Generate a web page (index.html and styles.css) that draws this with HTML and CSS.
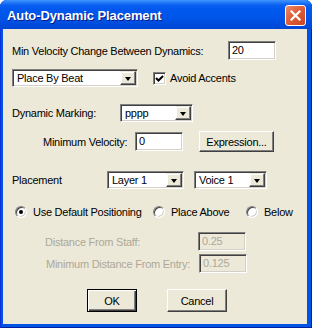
FILE: index.html
```
<!DOCTYPE html>
<html>
    <head>
        <meta charset="utf-8">
        <title>Auto-Dynamic Placement</title>
        <link rel="stylesheet" href="styles.css">
    </head>
    <body>
        <div class="window">
            <div class="titlebar">
                <span class="title">Auto-Dynamic Placement</span>
                <span class="close">
                    <svg width="11" height="11" viewBox="0 0 11 11"><path d="M1.5 1.5 L9.5 9.5 M9.5 1.5 L1.5 9.5" stroke="#fff" stroke-width="2.2" stroke-linecap="square"/></svg>
                </span>
            </div>
            <div class="client">
                <div class="row r1">
                    <span class="label w-vel">Min Velocity Change Between Dynamics:</span>
                    <span class="field w48">20</span>
                </div>
                <div class="row r2">
                    <span class="select w126"><span class="value">Place By Beat</span><span class="arrow"><i></i></span></span>
                    <span class="check">
                        <svg width="9" height="9" viewBox="0 0 9 9"><path d="M1 4 L3.5 6.5 L8 2" fill="none" stroke="#000" stroke-width="2"/></svg>
                    </span>
                    <span class="label">Avoid Accents</span>
                </div>
                <div class="row r3">
                    <span class="label w-mark">Dynamic Marking:</span>
                    <span class="select w73"><span class="value">pppp</span><span class="arrow"><i></i></span></span>
                </div>
                <div class="row r4">
                    <span class="label w-minvel">Minimum Velocity:</span>
                    <span class="field w48">0</span>
                    <span class="button btn-expr">Expression...</span>
                </div>
                <div class="row r5">
                    <span class="label w-place">Placement</span>
                    <span class="select w77"><span class="value">Layer 1</span><span class="arrow"><i></i></span></span>
                    <span class="select w73 voice"><span class="value">Voice 1</span><span class="arrow"><i></i></span></span>
                </div>
                <div class="row r6">
                    <span class="radio-item w138"><span class="radio on"></span>Use Default Positioning</span>
                    <span class="radio-item w93"><span class="radio"></span>Place Above</span>
                    <span class="radio-item"><span class="radio"></span>Below</span>
                </div>
                <div class="row r7">
                    <span class="label disabled w153">Distance From Staff:</span>
                    <span class="field off w48">0.25</span>
                </div>
                <div class="row r8">
                    <span class="label disabled w153">Minimum Distance From Entry:</span>
                    <span class="field off w48">0.125</span>
                </div>
                <div class="row r9">
                    <span class="button default btn-ok">OK</span>
                    <span class="button btn-cancel">Cancel</span>
                </div>
            </div>
        </div>
    </body>
</html>
```
FILE: styles.css
```
body{
    margin: 0;
    background: #fff;
    font-family: "Liberation Sans", Arial, sans-serif;
    font-size: 11px;
    letter-spacing: -0.25px;
    color: #000;
}
.window{
    width: 312px;
    height: 328px;
    display: flex;
    flex-direction: column;
    background: #0054e3;
    border-radius: 7px 7px 0 0;
    box-shadow: inset 1px 0 #0831d9, inset -1px 0 #001ea0, inset 0 -1px #001ea0;
}
.titlebar{
    height: 29px;
    flex: none;
    display: flex;
    align-items: center;
    padding: 0 6px 0 7px;
    border-radius: 7px 7px 0 0;
    background: linear-gradient(#3d95ff 0, #2c7ff8 2px, #0a5ff0 5px, #0058ee 9px, #0055e8 18px, #004bdc 25px, #0046d4 29px);
}
.title{
    flex: 1;
    color: #fff;
    font-weight: bold;
    font-size: 13px;
    letter-spacing: -0.1px;
    text-shadow: 1px 1px #0a1883;
    margin-top: 1px;
}
.close{
    width: 19px;
    height: 19px;
    border: 1px solid #fff;
    border-radius: 3px;
    background: linear-gradient(135deg, #e98a6b 0%, #e0623f 40%, #c8451f 100%);
    display: flex;
    align-items: center;
    justify-content: center;
    margin-top: 1px;
}
.client{
    flex: 1;
    margin: 0 5px 4px 3px;
    background: #ece9d8;
    padding-left: 9px;
}
.row{
    display: flex;
    align-items: center;
}
.r1{ margin-top: 12px; height: 19px; }
.r2{ margin-top: 9px; height: 18px; }
.r3{ margin-top: 17px; height: 18px; }
.r4{ margin-top: 9px; height: 21px; padding-left: 31px; }
.r5{ margin-top: 19px; height: 18px; }
.r6{ margin-top: 16px; height: 14px; padding-left: 3px; }
.r7{ margin-top: 13px; height: 19px; padding-left: 33px; }
.r8{ margin-top: 3px; height: 19px; padding-left: 34px; }
.r9{ margin-top: 16px; height: 23px; padding-left: 75px; }

.label{ white-space: nowrap; }
.w-vel{ width: 216px; }
.w-mark{ width: 108px; }
.w-minvel{ width: 92px; }
.w-place{ width: 95px; }
.w153{ width: 153px; }
.disabled{ color: #aca899; }

.field{
    box-sizing: border-box;
    height: 19px;
    padding: 2px 0 0 3px;
    background: #fff;
    border: 1px solid;
    border-color: #808080 #fff #fff #808080;
    box-shadow: inset 1px 1px #404040, inset -1px -1px #d4d0c8;
}
.field.off{
    background: #ece9d8;
    color: #aca899;
}
.w48{ width: 48px; }

.select{
    box-sizing: border-box;
    height: 18px;
    display: flex;
    background: #fff;
    border: 1px solid;
    border-color: #808080 #fff #fff #808080;
    box-shadow: inset 1px 1px #404040, inset -1px -1px #d4d0c8;
    padding: 1px;
}
.select .value{
    flex: 1;
    padding: 1px 0 0 3px;
    white-space: nowrap;
}
.select .arrow{
    width: 16px;
    box-sizing: border-box;
    background: #ece9d8;
    border: 1px solid;
    border-color: #ece9d8 #404040 #404040 #fff;
    box-shadow: inset -1px -1px #808080, inset 1px 1px #fff;
    display: flex;
    align-items: center;
    justify-content: center;
}
.select .arrow i{
    width: 0;
    height: 0;
    border-left: 3.5px solid transparent;
    border-right: 3.5px solid transparent;
    border-top: 4px solid #000;
    margin-top: 1px;
}
.w126{ width: 126px; }
.w73{ width: 73px; }
.w77{ width: 77px; }
.voice{ margin-left: 10px; }

.check{
    box-sizing: border-box;
    width: 13px;
    height: 13px;
    margin: 0 4px 0 15px;
    background: #fff;
    border: 1px solid;
    border-color: #808080 #fff #fff #808080;
    box-shadow: inset 1px 1px #404040, inset -1px -1px #d4d0c8;
    display: flex;
    align-items: center;
    justify-content: center;
}

.button{
    box-sizing: border-box;
    display: flex;
    align-items: center;
    justify-content: center;
    background: #ece9d8;
    border: 1px solid;
    border-color: #fff #404040 #404040 #fff;
    box-shadow: inset -1px -1px #808080;
}
.btn-expr{
    width: 75px;
    height: 21px;
    margin-left: 16px;
}
.button.default{
    border: 1px solid #000;
    box-shadow: inset 1px 1px #fff, inset -1px -1px #404040, inset -2px -2px #808080;
}
.btn-ok{ width: 50px; height: 23px; }
.btn-cancel{ width: 60px; height: 23px; margin-left: 30px; }

.radio-item{
    display: flex;
    align-items: center;
    white-space: nowrap;
}
.w138{ width: 138px; }
.w93{ width: 93px; }
.radio{
    box-sizing: border-box;
    width: 12px;
    height: 12px;
    margin-right: 6px;
    border-radius: 50%;
    background: #fff;
    border: 1px solid;
    border-color: #808080 #fff #fff #808080;
    box-shadow: inset 1px 1px #404040, inset -1px -1px #d4d0c8;
    display: flex;
    align-items: center;
    justify-content: center;
}
.radio.on::after{
    content: "";
    width: 4px;
    height: 4px;
    border-radius: 50%;
    background: #000;
}
```
